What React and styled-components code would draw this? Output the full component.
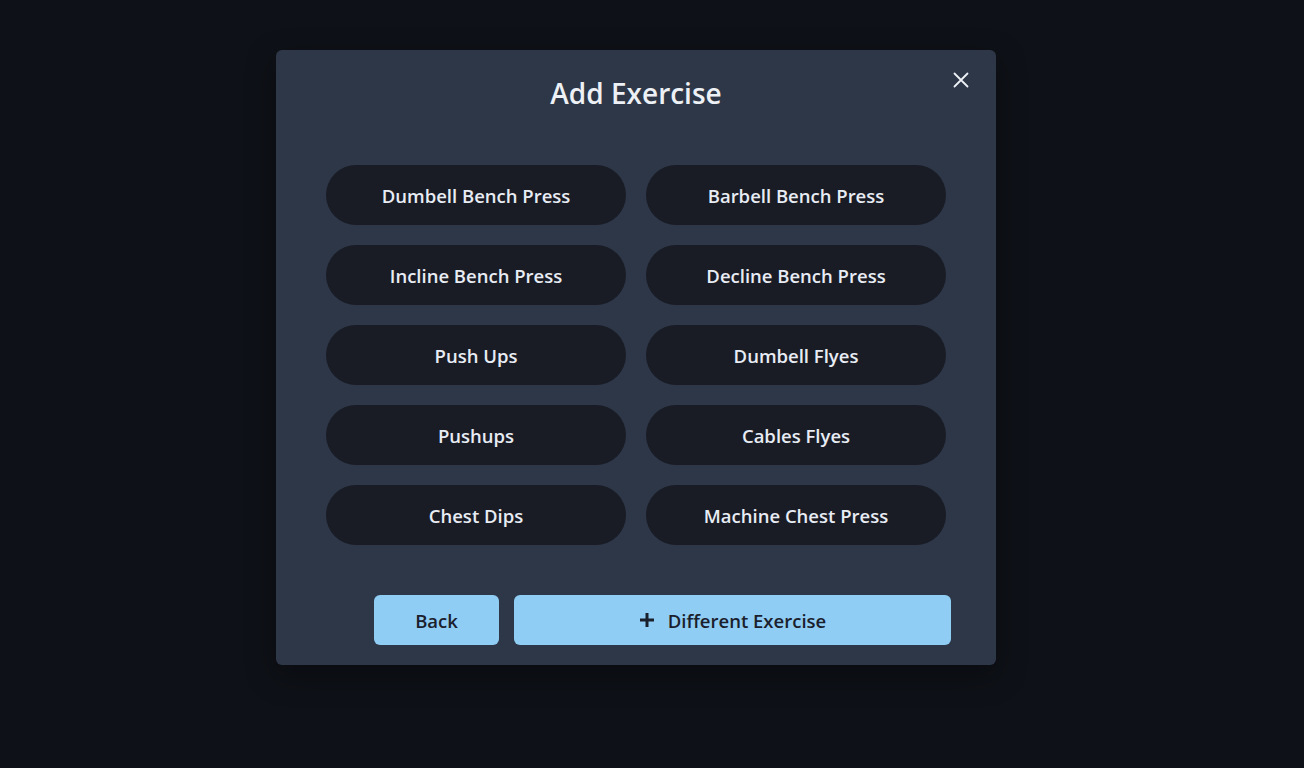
import styled, { createGlobalStyle } from "styled-components";

const GlobalStyle = createGlobalStyle`
  html, body {
    margin: 0;
    padding: 0;
    background: #0e1117;
    font-family: "Open Sans", "Noto Sans", sans-serif;
  }
`;

const exercises = [
  "Dumbell Bench Press",
  "Barbell Bench Press",
  "Incline Bench Press",
  "Decline Bench Press",
  "Push Ups",
  "Dumbell Flyes",
  "Pushups",
  "Cables Flyes",
  "Chest Dips",
  "Machine Chest Press",
];

const Overlay = styled.div`
  width: 100%;
  height: 768px;
  display: flex;
  justify-content: center;
  align-items: flex-start;
  padding: 50px 32px 0 0;
  box-sizing: border-box;
`;

const Modal = styled.section`
  position: relative;
  width: 720px;
  height: 615px;
  box-sizing: border-box;
  background: #2d3748;
  border-radius: 6px;
  box-shadow: 0 10px 30px rgba(0, 0, 0, 0.35);
  display: flex;
  flex-direction: column;
`;

const Header = styled.h2`
  margin: 0;
  padding: 23px 0 0;
  height: 66px;
  box-sizing: border-box;
  text-align: center;
  font-size: 28px;
  font-weight: 600;
  color: #edf0f4;
  line-height: 40px;
`;

const Close = styled.button`
  position: absolute;
  top: 14px;
  right: 19px;
  width: 32px;
  height: 32px;
  border: none;
  background: transparent;
  color: #edf0f4;
  display: flex;
  align-items: center;
  justify-content: center;
  padding: 0;
  cursor: pointer;
`;

const Grid = styled.div`
  margin-top: 49px;
  padding: 0 50px;
  display: grid;
  grid-template-columns: 300px 300px;
  column-gap: 20px;
  row-gap: 20px;
`;

const Pill = styled.button`
  height: 60px;
  border: none;
  border-radius: 30px;
  background: #1a1c25;
  color: #e8ecf4;
  font-family: inherit;
  font-size: 18.5px;
  font-weight: 600;
  cursor: pointer;
`;

const Footer = styled.div`
  margin-top: 50px;
  padding-right: 45px;
  display: flex;
  justify-content: flex-end;
  gap: 15px;
`;

const ActionButton = styled.button`
  width: ${(p) => p.$width}px;
  height: 50px;
  border: none;
  border-radius: 6px;
  background: #90cdf4;
  color: #1a202c;
  font-family: inherit;
  font-size: 18.5px;
  font-weight: 600;
  display: flex;
  align-items: center;
  justify-content: center;
  gap: 13px;
  padding-top: 1px;
  cursor: pointer;
`;

const CloseIcon = () => (
  <svg width="16" height="16" viewBox="0 0 16 16">
    <path d="M1.5 1.5 L14.5 14.5 M14.5 1.5 L1.5 14.5" stroke="currentColor" strokeWidth="1.8" strokeLinecap="round" />
  </svg>
);

const PlusIcon = () => (
  <svg width="16" height="16" viewBox="0 0 16 16">
    <path d="M8 1 V15 M1 8 H15" stroke="currentColor" strokeWidth="3" />
  </svg>
);

export default function App() {
  return (
    <>
      <GlobalStyle />
      <Overlay>
        <Modal>
          <Header>Add Exercise</Header>
          <Close aria-label="Close">
            <CloseIcon />
          </Close>
          <Grid>
            {exercises.map((name) => (
              <Pill key={name}>{name}</Pill>
            ))}
          </Grid>
          <Footer>
            <ActionButton $width={125}>Back</ActionButton>
            <ActionButton $width={437}>
              <PlusIcon />
              Different Exercise
            </ActionButton>
          </Footer>
        </Modal>
      </Overlay>
    </>
  );
}
